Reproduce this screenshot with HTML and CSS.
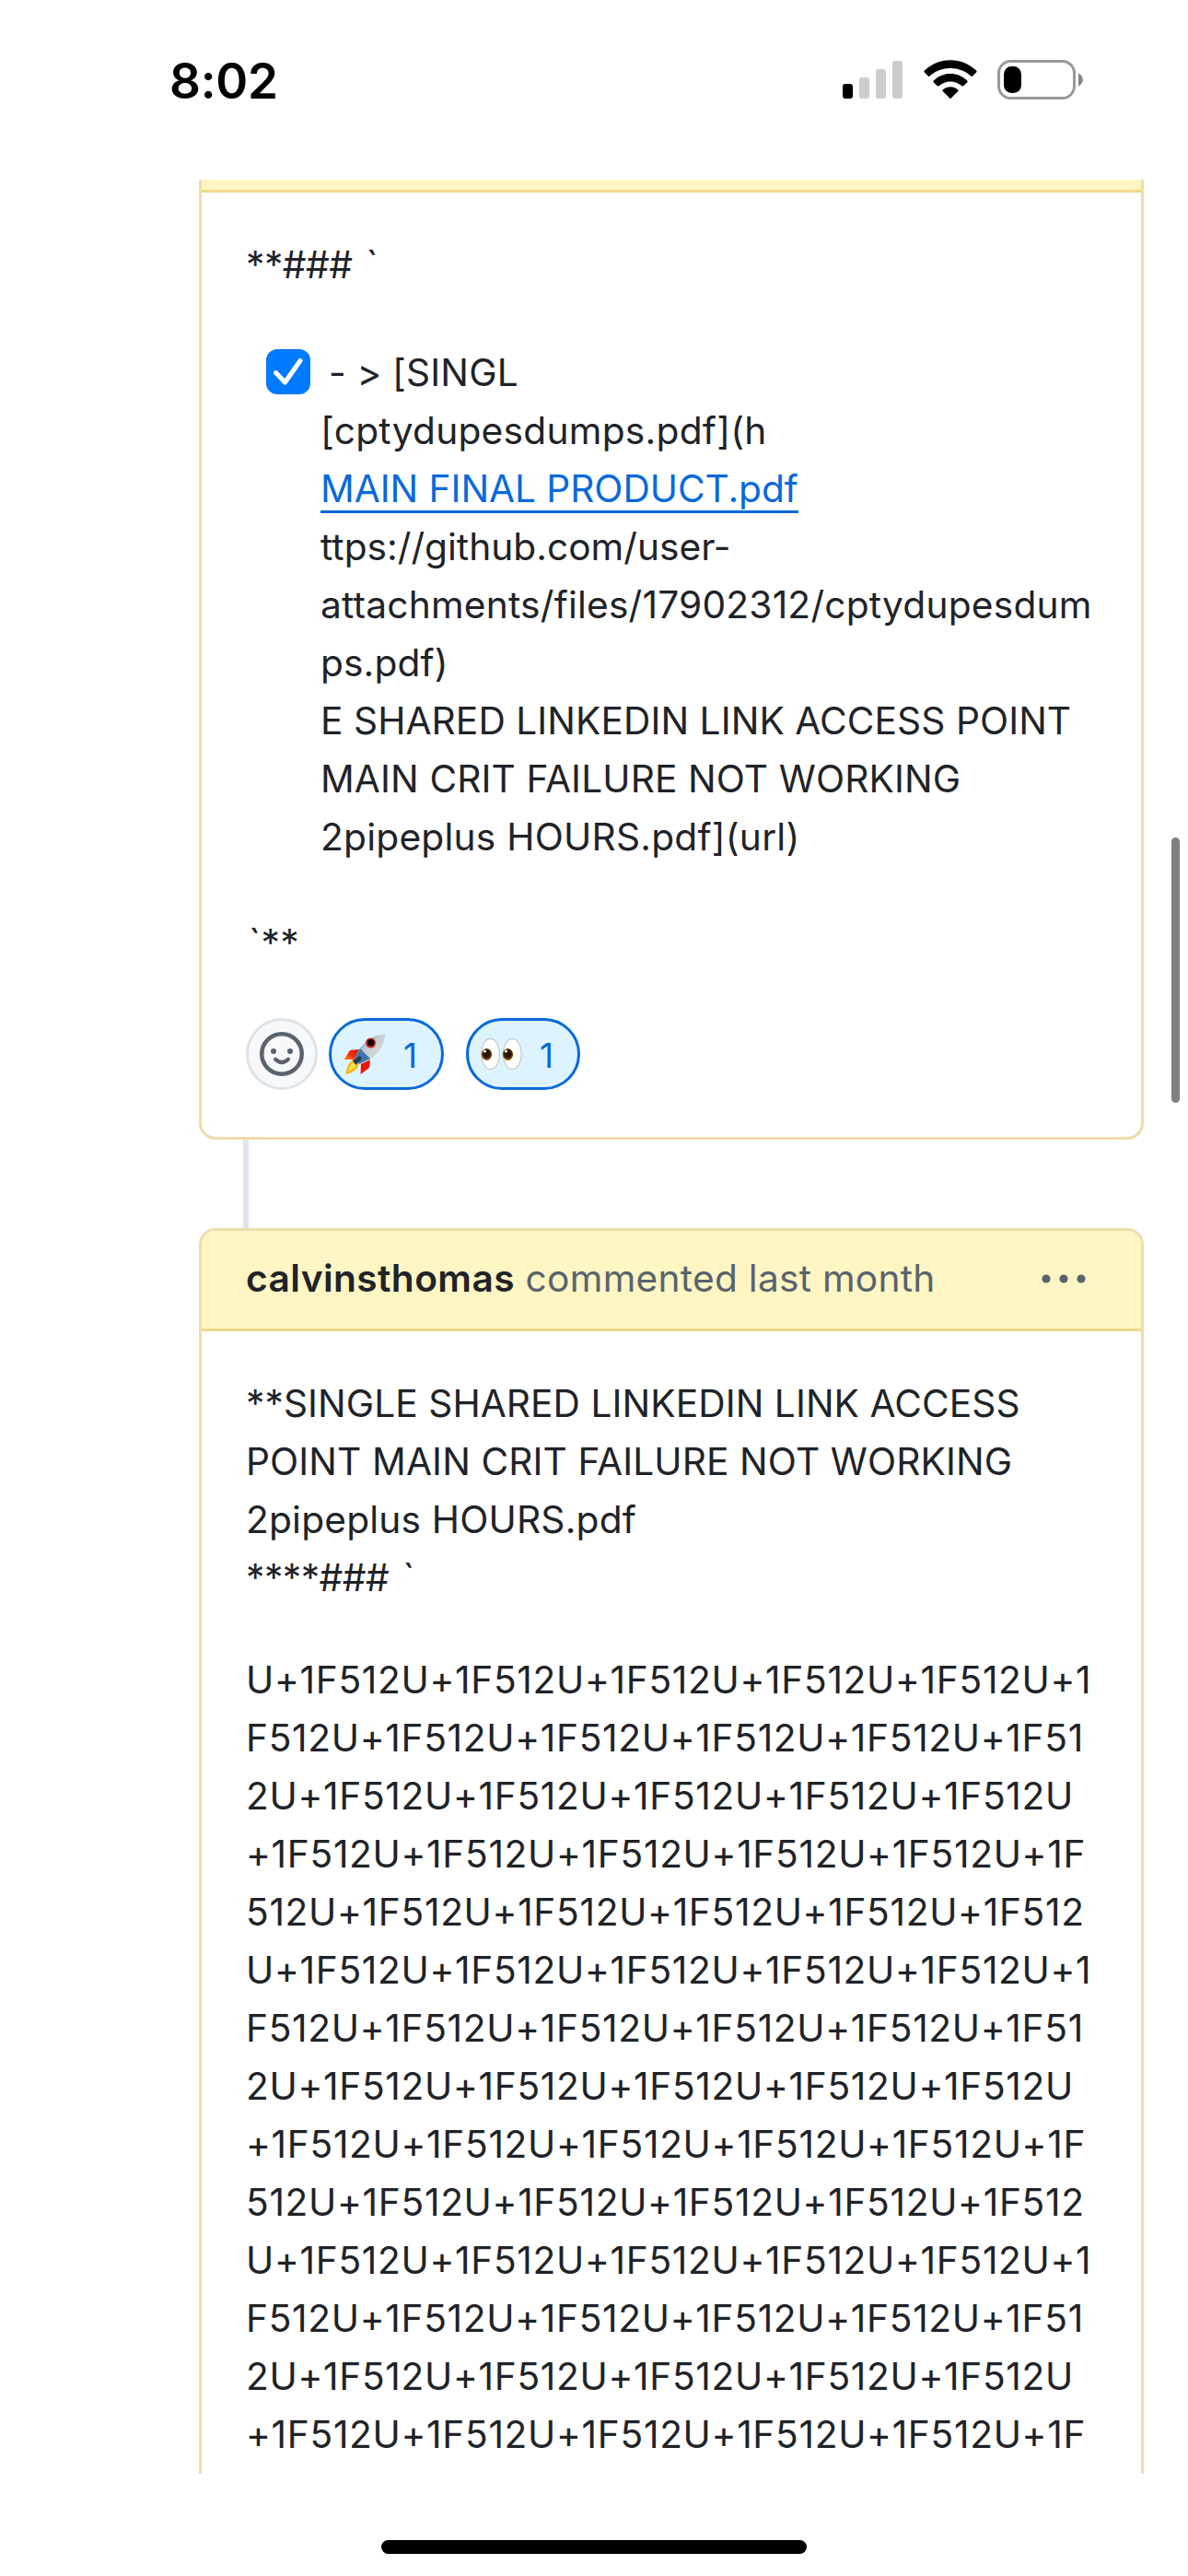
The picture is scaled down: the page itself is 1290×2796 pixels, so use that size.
FILE: index.html
```
<!DOCTYPE html>
<html lang="en">
<head>
<meta charset="utf-8">
<title>Comments</title>
<link rel="stylesheet" href="styles.css">
</head>
<body>
<div class="status">
  <time class="clock">8:02</time>
  <div class="status-icons">
    <svg width="66" height="42" viewBox="0 0 66 42"><rect x="0" y="25" width="11" height="16" rx="3"/><g fill="#ccc"><rect x="18" y="18" width="11" height="23" rx="3"/><rect x="36" y="9" width="11" height="32" rx="3"/><rect x="54" y="0" width="11" height="41" rx="3"/></g></svg>
    <svg class="wifi" width="58" height="43" viewBox="0 0 58 43"><path d="M29 42.300L20.500 33.800Q20 33 20.900 32.300C25.500 28.300 32.500 28.300 37.100 32.300Q38 33 37.500 33.800Z"/><path d="M10.600 24.200Q10 23.300 10.800 22.500C21 12.600 37 12.600 47.200 22.500Q48 23.300 47.400 24.200L43.200 28.300Q42.300 28.900 41.400 28.200C34.200 21.800 23.800 21.800 16.600 28.200Q15.700 28.900 14.800 28.300Z"/><path d="M.6 13.300Q0 12.400.9 11.600C16.600-3.600 41.400-3.600 57.100 11.600Q58 12.400 57.400 13.300L53 17.700Q52.100 18.300 51.300 17.600C38.800 6.200 19.200 6.200 6.700 17.600Q5.900 18.300 5 17.700Z"/></svg>
    <svg class="battery" width="94" height="43" viewBox="0 0 94 43"><rect x="1.500" y="1.500" width="82" height="40" rx="13" fill="none" stroke="#999" stroke-width="3"/><rect x="7" y="7" width="19" height="29" rx="8.500"/><path d="M88 14.500C94.400 17 94.400 26 88 28.500Z" fill="#858585"/></svg>
  </div>
</div>

<main class="thread">
  <article class="comment comment-cut">
    <header class="sliver"></header>
    <div class="body">
      <p><span class="ticks">**###&nbsp;<span class="tick">`</span></span></p>
      <div class="task">
        <svg class="check" width="48" height="49" viewBox="0 0 48 49"><rect width="48" height="49" rx="12" fill="#007aff"/><path d="M10.500 25.500L20.500 36L37 12.500" fill="none" stroke="#fff" stroke-width="5" stroke-linecap="round" stroke-linejoin="round"/></svg>
        <div>
          <span class="ln first">- &gt; [SINGL</span>
          <span class="ln t29">[cptydupesdumps.pdf](h</span>
          <span class="ln tm"><a class="link">MAIN FINAL PRODUCT.pdf</a></span>
          <span class="ln t0">ttps://github.com/user-</span>
          <span class="ln t20">attachments/files/17902312/cptydupesdum</span>
          <span class="ln t13">ps.pdf)</span>
          <span class="ln t8">E SHARED LINKEDIN LINK ACCESS POINT</span>
          <span class="ln t13">MAIN CRIT FAILURE NOT WORKING</span>
          <span class="ln t22">2pipeplus HOURS.pdf](url)</span>
        </div>
      </div>
      <p class="last">`**</p>
      <div class="reactions">
        <span class="smiley"><svg width="48" height="48" viewBox="0 0 16 16" fill="#59636e"><circle cx="8" cy="8" r="7.250" fill="none" stroke="#59636e" stroke-width="1.500"/><circle cx="5" cy="7" r="1"/><circle cx="11" cy="7" r="1"/><path d="M5.700 9.900Q8 12.100 10.300 9.900" fill="none" stroke="#59636e" stroke-width="1.400" stroke-linecap="round"/></svg></span>
        <span class="pill">
          <svg class="emoji" width="46" height="46" viewBox="0 0 46 46"><defs><linearGradient id="hull" x1="0" y1="0" x2="1" y2="1"><stop offset="0" stop-color="#3d8ac9"/><stop offset=".45" stop-color="#c5cdd4"/><stop offset=".7" stop-color="#d8d8d4"/><stop offset="1" stop-color="#536475"/></linearGradient><linearGradient id="fin" x1="0" y1="1" x2="1" y2="0"><stop offset="0" stop-color="#ff8a1c"/><stop offset=".5" stop-color="#f5280c"/><stop offset="1" stop-color="#d20f10"/></linearGradient></defs><path d="M17 17L7 18L.500 28L12 28Z" fill="url(#fin)"/><path d="M29 28L28 37L18.500 44L19 33Z" fill="#ee1508"/><path d="M12 27C5 31 3 38 2.500 44.500C10 42 16 39 17 32Z" fill="#f6b61c"/><path d="M11 31C7 34 6 38 5.500 41C10 39 13 36 14 33Z" fill="#ffe94e"/><path d="M45 .800C35 0 24 7 17 17L12 27L17 33L27 29C38 22 45 12 45 .800Z" fill="url(#hull)"/><path d="M18 16L29 27L17 33L12 27Z" fill="#3f76ad"/><path d="M18 24L10 29L13 34L20 27Z" fill="#29394f"/><circle cx="29.500" cy="10" r="5.500" fill="#c92927"/><circle cx="29.700" cy="9.700" r="3.700" fill="#120708"/></svg>
          <span class="count">1</span>
        </span>
        <span class="pill eyes-pill">
          <svg class="emoji" width="46" height="46" viewBox="0 0 46 46"><defs><radialGradient id="iris" cx=".5" cy=".45" r=".55"><stop offset=".55" stop-color="#2a1400"/><stop offset="1" stop-color="#a87810"/></radialGradient></defs><g fill="#fff" stroke="#c6c6c6" stroke-width="1.200"><ellipse cx="10.500" cy="22" rx="9.800" ry="16.700"/><ellipse cx="34.300" cy="22" rx="9.800" ry="16.700"/></g><g fill="url(#iris)"><ellipse cx="6.500" cy="22.500" rx="5.700" ry="6.500"/><ellipse cx="29.500" cy="22.500" rx="5.700" ry="6.500"/></g><g fill="#fff"><circle cx="4.500" cy="19" r="1.500"/><circle cx="27.500" cy="19" r="1.500"/></g></svg>
          <span class="count">1</span>
        </span>
      </div>
    </div>
  </article>
  <div class="connector"></div>
  <article class="comment comment-open">
    <header class="head">
      <div><strong class="author">calvinsthomas</strong> <span class="when">commented last month</span></div>
      <svg width="48" height="12" viewBox="0 0 48 12" fill="#59636e"><circle cx="5" cy="6" r="4.600"/><circle cx="24" cy="6" r="4.600"/><circle cx="43" cy="6" r="4.600"/></svg>
    </header>
    <div class="body">
      <p>
        <span class="ln t8">**SINGLE SHARED LINKEDIN LINK ACCESS</span>
        <span class="ln t13">POINT MAIN CRIT FAILURE NOT WORKING</span>
        <span class="ln t16">2pipeplus HOURS.pdf</span>
        <span class="ln ticks">****###&nbsp;<span class="tick">`</span></span>
      </p>
      <p class="codes">
        <span class="ln">U+1F512U+1F512U+1F512U+1F512U+1F512U+1</span>
        <span class="ln">F512U+1F512U+1F512U+1F512U+1F512U+1F51</span>
        <span class="ln">2U+1F512U+1F512U+1F512U+1F512U+1F512U</span>
        <span class="ln">+1F512U+1F512U+1F512U+1F512U+1F512U+1F</span>
        <span class="ln">512U+1F512U+1F512U+1F512U+1F512U+1F512</span>
        <span class="ln">U+1F512U+1F512U+1F512U+1F512U+1F512U+1</span>
        <span class="ln">F512U+1F512U+1F512U+1F512U+1F512U+1F51</span>
        <span class="ln">2U+1F512U+1F512U+1F512U+1F512U+1F512U</span>
        <span class="ln">+1F512U+1F512U+1F512U+1F512U+1F512U+1F</span>
        <span class="ln">512U+1F512U+1F512U+1F512U+1F512U+1F512</span>
        <span class="ln">U+1F512U+1F512U+1F512U+1F512U+1F512U+1</span>
        <span class="ln">F512U+1F512U+1F512U+1F512U+1F512U+1F51</span>
        <span class="ln">2U+1F512U+1F512U+1F512U+1F512U+1F512U</span>
        <span class="ln">+1F512U+1F512U+1F512U+1F512U+1F512U+1F</span>
      </p>
    </div>
  </article>
</main>
<footer class="home"><div class="home-bar"></div></footer>
<div class="scrollbar"></div>
</body>
</html>
```
FILE: styles.css
```
* { box-sizing: border-box; }
body {
  margin: 0;
  width: 1290px;
  height: 2796px;
  display: flex;
  flex-direction: column;
  overflow: hidden;
  background: #fff;
  color: #1f2328;
  font: 40.7px/63px Inter, "Liberation Sans", sans-serif;
}
svg { display: block; flex: none; }
p { margin: 0; }

.status {
  height: 195px;
  flex: none;
  display: flex;
  justify-content: space-between;
  align-items: flex-start;
  padding: 57px 113px 0 184px;
}
.clock { font-size: 53px; font-weight: 600; color: #000; letter-spacing: -.3px; }
.status-icons { display: flex; padding-top: 8px; }
.status-icons svg:first-child { margin-top: 1px; }
.wifi { margin-left: 22px; }
.battery { margin-left: 22px; }

.thread {
  height: 2490px;
  flex: none;
  overflow: hidden;
  display: flex;
  flex-direction: column;
  padding: 0 48px 0 216px;
}
.comment { flex: none; border: 3px solid #eedcaa; border-radius: 18px; }
.comment-cut { height: 1042px; border-top: 0; border-radius: 0 0 18px 18px; }
.comment-open { flex: 1 0 auto; border-bottom: 0; border-radius: 18px 18px 0 0; }
.sliver { height: 14px; background: #fff6c3; border-bottom: 3px solid #eed88b; }
.head {
  height: 109px;
  display: flex;
  align-items: center;
  justify-content: space-between;
  padding: 0 60px 3px 48px;
  background: #fff6c3;
  border-bottom: 3px solid #eed88b;
  border-radius: 15px 15px 0 0;
  letter-spacing: .25px;
}
.author { font-weight: 600; letter-spacing: .4px; }
.when { color: #59636e; }
.body { padding: 47px 48px 0; }
.ln { display: block; white-space: nowrap; }

.ticks { letter-spacing: -.5px; }
.tick { margin-left: 4px; }
.task { display: flex; padding: 54px 0 0 22px; }
.check { margin: 6px 11px 0 0; }
.first { padding-left: 9px; letter-spacing: .14px; }
.link { color: #0969da; box-shadow: 0 3px #0969da; display: inline-block; height: 55px; line-height: 63px; vertical-align: top; }
.tm { letter-spacing: -.06px; }
.t0 { letter-spacing: 0; }
.t8 { letter-spacing: .06px; }
.t13 { letter-spacing: .11px; }
.t16 { letter-spacing: .185px; }
.t20 { letter-spacing: .196px; }
.t22 { letter-spacing: .224px; }
.t29 { letter-spacing: .25px; }
.last { padding: 52px 0 0 3px; letter-spacing: .4px; }

.reactions { display: flex; padding-top: 50px; }
.smiley, .pill { height: 78px; border-radius: 39px; display: flex; align-items: center; }
.smiley { width: 78px; justify-content: center; background: #f6f8fa; border: 3px solid #dce3e9; }
.pill {
  width: 125px;
  margin-left: 12px;
  padding: 2px 26px 0 13px;
  justify-content: space-between;
  background: #ddf4ff;
  border: 3px solid #0969da;
}
.eyes-pill { width: 124px; margin-left: 24px; }
.count { color: #0969da; font-size: 37px; }

.connector { flex: none; width: 6px; height: 96px; margin-left: 48px; background: #dfe3ec; }
.codes { padding-top: 48px; letter-spacing: .665px; }

.home { flex: 1; display: flex; justify-content: center; padding-top: 72px; }
.home-bar { width: 462px; height: 15px; border-radius: 8px; background: #000; }
.scrollbar { position: absolute; left: 1272px; top: 909px; width: 9px; height: 288px; border-radius: 5px; background: #808080; }
```
